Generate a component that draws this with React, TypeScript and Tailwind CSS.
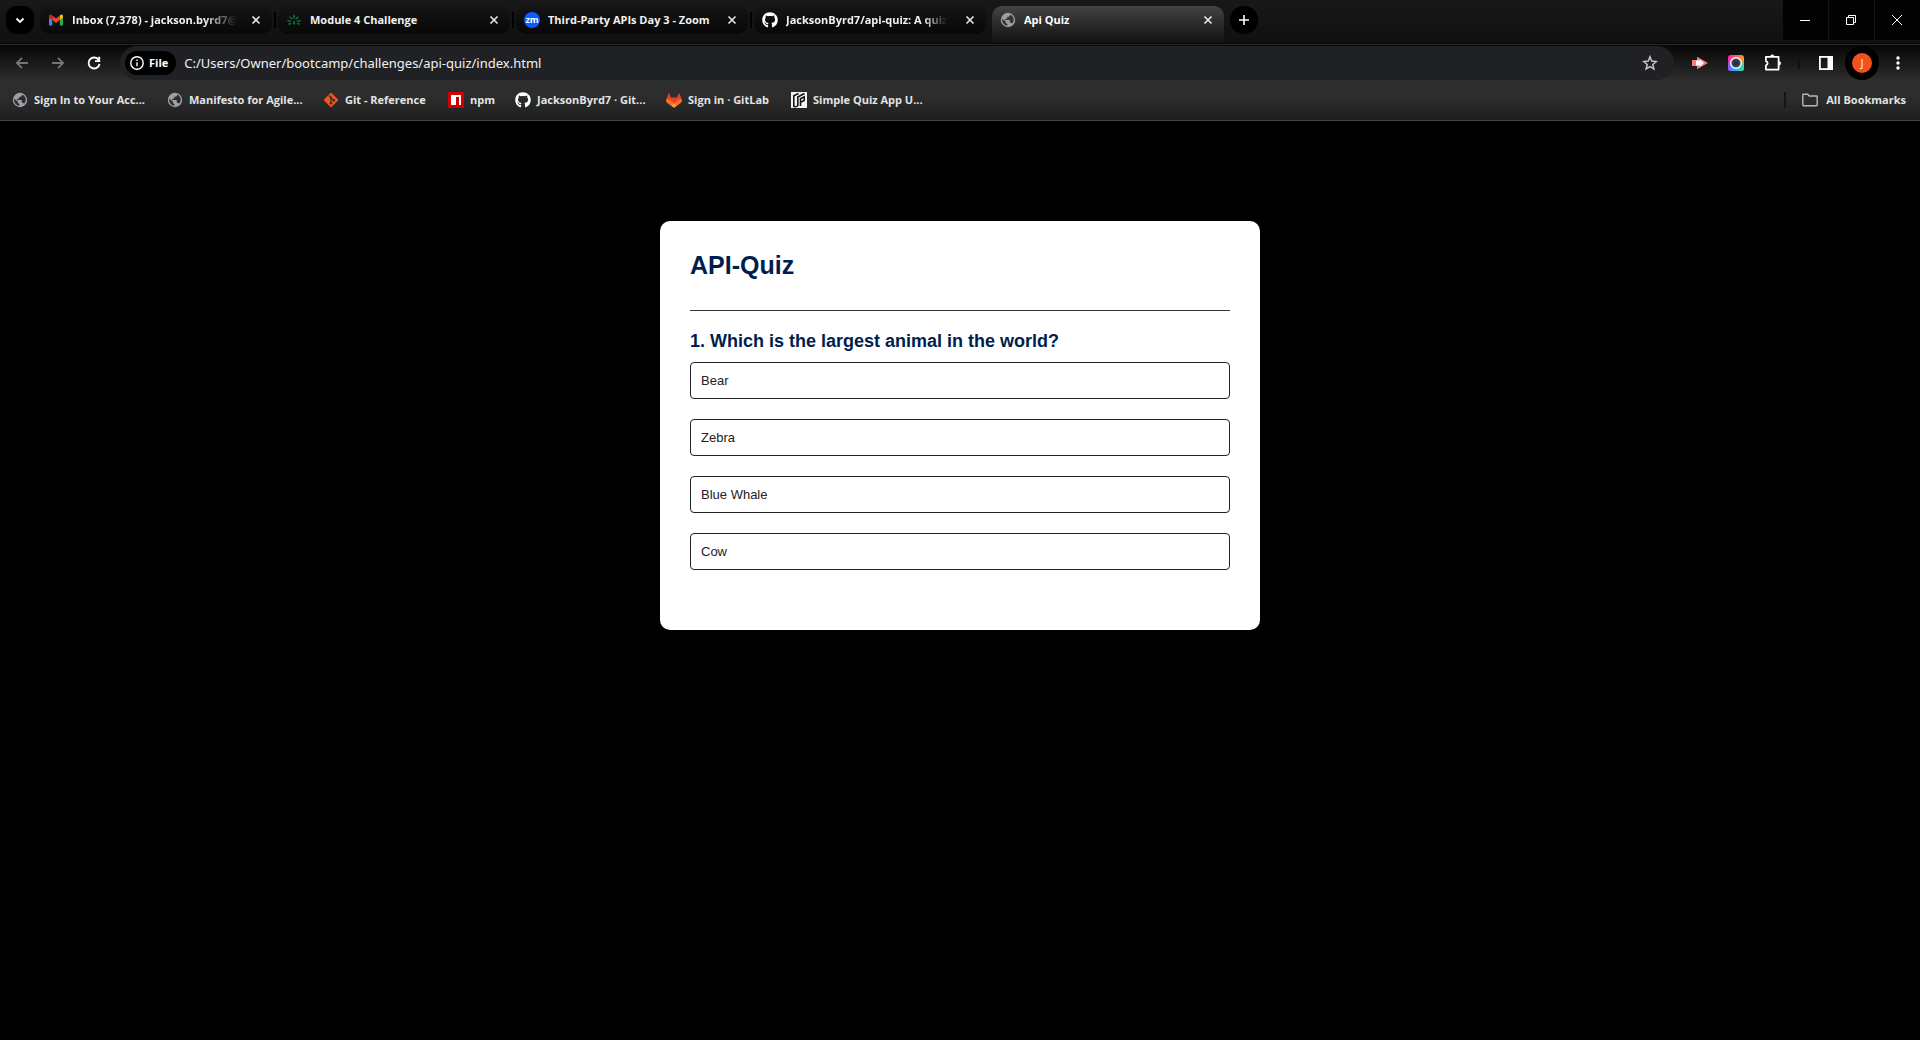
import React from "react";
import { FaGithub } from "react-icons/fa";

const Globe = ({ dark = "#2c2c2c" }: { dark?: string }) => (
  <svg viewBox="0 0 16 16" className="size-4 shrink-0" aria-hidden="true">
    <circle cx="8" cy="8" r="7.200" fill="#9aa0a6" />
    <path
      d="M2.200 6.800 5.800 9.600v1.500l1.600 1v1.700C4.400 13.500 2.200 11 2.200 8zM10 2.400v.9c0 .8-.6 1.400-1.400 1.400H7.300v1.400c0 .4-.3.700-.7.700H5.200v1.300h4c.4 0 .7.300.7.700v2h.8c.6 0 1.100.4 1.300.9A5.600 5.600 0 0 0 10 2.400z"
      fill={dark}
    />
  </svg>
);

const Gmail = () => (
  <svg viewBox="0 0 16 16" className="size-4 shrink-0" aria-hidden="true">
    <path d="M1 4v8.500c0 .6.400 1 1 1h2.200V7z" fill="#4285f4" />
    <path d="M15 4v8.500c0 .6-.4 1-1 1h-2.200V7z" fill="#34a853" />
    <path d="M11.800 3.500V8L15 5.700V4c0-1.500-1.500-2-2.500-1z" fill="#fbbc04" />
    <path d="M4.200 3.500V8L1 5.700V4c0-1.500 1.500-2 2.500-1z" fill="#c5221f" />
    <path d="M4.200 8V3.500L8 6.400l3.800-2.900V8L8 11z" fill="#ea4335" />
  </svg>
);

const Lotus = () => (
  <svg viewBox="0 0 16 16" className="size-4 shrink-0" fill="#0b6b3d" aria-hidden="true">
    <path d="M8 2.500c1.500 1.400 1.500 3 0 4.600-1.500-1.600-1.500-3.200 0-4.600z" />
    <path d="M3.200 4.200c2 .3 3.200 1.500 3.500 3.500-2-.2-3.300-1.500-3.500-3.500zM12.800 4.200c-2 .3-3.200 1.500-3.500 3.500 2-.2 3.300-1.500 3.500-3.500z" />
    <path d="M.8 8.200c2-.5 3.600.1 4.700 1.700-2 .5-3.600 0-4.700-1.700zM15.200 8.200c-2-.5-3.600.1-4.700 1.700 2 .5 3.600 0 4.700-1.700z" />
    <path d="M1.600 12.300c1-1.300 2.400-1.600 4-.9-.9 1.400-2.300 1.700-4 .9zM14.400 12.300c-1-1.300-2.400-1.600-4-.9.9 1.400 2.300 1.700 4 .9z" />
    <path d="M8 8.500c1.200 1.200 1.500 2.500.9 4H7.100c-.6-1.500-.3-2.800.9-4z" />
  </svg>
);

const ZoomLogo = () => (
  <span className="flex size-4 shrink-0 items-center justify-center rounded-full bg-[#0b5cff] pb-px text-[9px] leading-none font-bold text-white">zm</span>
);

const Git = () => (
  <svg viewBox="0 0 16 16" className="size-4 shrink-0" aria-hidden="true">
    <rect x="2.700" y="2.700" width="10.600" height="10.600" rx="1" transform="rotate(45 8 8)" fill="#f4511e" />
    <path d="M6 3.500 8 5.500v5.500M8 5.800l2.700 2.500" stroke="#2c2c2c" strokeWidth="1.100" fill="none" />
    <circle cx="8" cy="5.700" r="1.100" fill="#2c2c2c" />
    <circle cx="8" cy="11.200" r="1.200" fill="#2c2c2c" />
    <circle cx="10.800" cy="8.300" r="1.200" fill="#2c2c2c" />
  </svg>
);

const Npm = () => (
  <svg viewBox="0 0 16 16" className="size-4 shrink-0" aria-hidden="true">
    <path d="M0 0h16v16H0z" fill="#c00" />
    <path d="M3 3h10v10h-2V5H8v8H3z" fill="#fff" />
  </svg>
);

const GitHub = () => <FaGithub className="size-4 shrink-0 text-white" aria-hidden="true" />;

const GitLab = () => (
  <svg viewBox="0 0 16 16" className="size-4 shrink-0" aria-hidden="true">
    <path d="M3 .8 5 5.500h6L13 .8l2.600 6.200c.6 2-.1 3.500-1.600 4.500L8 15.800l-6-4.300C.5 10.500-.2 9 .4 7z" fill="#e24329" />
    <path d="M.4 7C2.500 7 4 7.800 5.500 9L11 13.600 8 15.800l-6-4.300C.5 10.500-.2 9 .4 7zM15.600 7c-2.100 0-3.600.8-5.100 2L5 13.600l3 2.200 6-4.300c1.500-1 2.200-2.500 1.600-4.500z" fill="#fc6d26" />
    <path d="M8 11.200 11 13.600 8 15.800 5 13.600z" fill="#fca326" />
  </svg>
);

const QuizMark = () => (
  <svg viewBox="0 0 16 16" className="size-4 shrink-0" aria-hidden="true">
    <path d="M0 0h16v16H0z" fill="#f5f5f5" />
    <path d="M7.500 1.500 2.800 3.800v10.400l2 .8M13.500 1.500 6.800 5v8.500l-1.500 1.500M9.500 14V6.800l3.700-2v3.600l-3.700 2" stroke="#151515" strokeWidth="1.600" fill="none" />
  </svg>
);

const Close = () => (
  <button type="button" aria-label="Close tab" className="flex size-4 shrink-0 items-center justify-center text-[#e8e8e8]">
    <svg viewBox="0 0 16 16" className="size-4" fill="none" stroke="currentColor" strokeWidth="1.600">
      <path d="m4.500 4.500 7 7m0-7-7 7" />
    </svg>
  </button>
);

const tabs = [
  { title: "Inbox (7,378) - jackson.byrd7@", icon: <Gmail />, fade: "mask-r-from-80%" },
  { title: "Module 4 Challenge", icon: <Lotus />, fade: "" },
  { title: "Third-Party APIs Day 3 - Zoom", icon: <ZoomLogo />, fade: "" },
  { title: "JacksonByrd7/api-quiz: A quiz", icon: <GitHub />, fade: "mask-r-from-85%" },
];

const bookmarks = [
  { title: "Sign In to Your Acc...", icon: <Globe />, width: "w-[155px]" },
  { title: "Manifesto for Agile...", icon: <Globe />, width: "w-[156px]" },
  { title: "Git - Reference", icon: <Git />, width: "w-[125px]" },
  { title: "npm", icon: <Npm />, width: "w-[67px]" },
  { title: "JacksonByrd7 · Git...", icon: <GitHub />, width: "w-[151px]" },
  { title: "Sign in · GitLab", icon: <GitLab />, width: "w-[125px]" },
  { title: "Simple Quiz App U...", icon: <QuizMark />, width: "w-[140px]" },
];

const TabStrip = () => (
  <div className="flex h-[43px] items-start bg-linear-to-b from-[#181818] to-[#101010] pl-1.5">
    <button type="button" aria-label="Search tabs" className="mt-1.5 mr-1.5 flex size-7 shrink-0 items-center justify-center rounded-[10px] bg-black text-white">
      <svg viewBox="0 0 16 16" className="size-4" fill="none" stroke="currentColor" strokeWidth="1.800">
        <path d="m4.500 6.500 3.500 3.500 3.500-3.500" />
      </svg>
    </button>
    {tabs.map((tab, i) => (
      <React.Fragment key={tab.title}>
        <div className="mt-1.5 flex h-7 w-[232px] items-center rounded-[10px] bg-linear-to-b from-[#141414] to-[#080808] px-2">
          {tab.icon}
          <a href="#" className="ml-2 flex-1 text-[11px] leading-4 font-bold whitespace-nowrap text-[#f1f1f1]">
            <span className={tab.fade}>{tab.title}</span>
          </a>
          <Close />
        </div>
        <div className="flex w-1.5 justify-center pt-3">{i < 3 && <div className="h-4 w-0.5 bg-black" />}</div>
      </React.Fragment>
    ))}
    <div className="mt-1.5 flex h-[37px] w-[232px] items-start rounded-t-[10px] bg-linear-to-b from-[#444444] to-[#121212] px-2 pt-1.5">
      <Globe dark="#363636" />
      <a href="#" className="mr-2 ml-2 flex-1 text-[11px] leading-4 font-bold text-white">
        Api Quiz
      </a>
      <Close />
    </div>
    <button type="button" aria-label="New tab" className="mt-1.5 ml-1.5 flex size-7 shrink-0 items-center justify-center rounded-full bg-black text-white">
      <svg viewBox="0 0 16 16" className="size-4" stroke="currentColor" strokeWidth="1.600">
        <path d="M8 3v10M3 8h10" />
      </svg>
    </button>
    <div className="ml-auto flex h-10 gap-px bg-[#151515] text-white">
      <button type="button" aria-label="Minimize" className="flex w-[45px] items-center justify-center bg-[#020202] pr-px">
        <span className="h-px w-2.5 bg-white" />
      </button>
      <button type="button" aria-label="Restore" className="flex w-[45px] items-center justify-center bg-[#020202] pr-px">
        <svg viewBox="0 0 10 10" className="size-2.5" fill="none" stroke="currentColor">
          <path d="M.5 2.500h7v7h-7zM2.500 2.500v-2h7v7h-2" />
        </svg>
      </button>
      <button type="button" aria-label="Close window" className="flex w-[45px] items-center justify-center bg-[#020202] pr-px">
        <svg viewBox="0 0 10 10" className="size-2.5" fill="none" stroke="currentColor">
          <path d="m0 0 10 10M10 0 0 10" />
        </svg>
      </button>
    </div>
  </div>
);

const Toolbar = () => (
  <div className="flex h-[34px] items-center px-3.5 text-white">
    <button type="button" aria-label="Back" className="mr-5 text-[#757575]">
      <svg viewBox="0 0 16 16" className="size-4" fill="none" stroke="currentColor" strokeWidth="1.800">
        <path d="M14 8H3.500M8 2.800 2.800 8 8 13.200" />
      </svg>
    </button>
    <button type="button" aria-label="Forward" className="mr-5 text-[#757575]">
      <svg viewBox="0 0 16 16" className="size-4" fill="none" stroke="currentColor" strokeWidth="1.800">
        <path d="M2 8h10.500M8 2.800 13.200 8 8 13.200" />
      </svg>
    </button>
    <button type="button" aria-label="Reload" className="mr-[18px]">
      <svg viewBox="0 0 16 16" className="size-4" fill="none" stroke="currentColor" strokeWidth="1.900">
        <path d="M12.700 5A5.500 5.500 0 1 0 13.500 9" />
        <path d="M13.200 1.800v4.300H9" />
      </svg>
    </button>
    <div className="flex h-full flex-1 items-center rounded-full bg-[#202124] pr-4 pl-[5px]">
      <button type="button" className="mr-2 flex h-6 items-center gap-[5px] rounded-full bg-black pr-2 pl-[5px] text-[11px] font-bold">
        <svg viewBox="0 0 14 14" className="size-3.5" fill="none" stroke="currentColor" strokeWidth="1.400">
          <circle cx="7" cy="7" r="6.200" />
          <path d="M7 6.200v4M7 3.500V5" />
        </svg>
        File
      </button>
      <input
        type="text"
        aria-label="Address and search bar"
        defaultValue="C:/Users/Owner/bootcamp/challenges/api-quiz/index.html"
        className="h-6 min-w-0 flex-1 bg-transparent font-['Noto_Sans','Open_Sans',sans-serif] text-[13px] text-[#f1f1f1] outline-none"
      />
      <button type="button" aria-label="Bookmark this page" className="text-[#c4c4c4]">
        <svg viewBox="0 0 16 16" className="size-4" fill="none" stroke="currentColor" strokeWidth="1.500">
          <path d="m8 1.800 1.700 4.300 4.600.4-3.500 3 1.100 4.500L8 11.600 4.100 14l1.100-4.500-3.500-3 4.600-.4z" />
        </svg>
      </button>
    </div>
    <button type="button" aria-label="Screen recorder" className="ml-[18px]">
      <svg viewBox="0 0 16 16" className="size-4">
        <path d="M0 5h5V1.800L16 8 5 14.200V11H0z" fill="#ff7b7b" />
        <path d="M4 5.500h4V4.500L12 8l-4 3.500v-1H4z" fill="#fff" />
      </svg>
    </button>
    <button type="button" aria-label="Screenshot" className="ml-5">
      <svg viewBox="0 0 16 16" className="size-4">
        <defs>
          <linearGradient id="cam-top" x1="0" x2="1" y1="0" y2="0">
            <stop offset="0" stopColor="#ff1fb0" />
            <stop offset="1" stopColor="#ff9d1c" />
          </linearGradient>
          <linearGradient id="cam-bottom" x1="0" x2="1" y1="0" y2="0">
            <stop offset="0" stopColor="#8a5cff" />
            <stop offset=".5" stopColor="#22b8ff" />
            <stop offset="1" stopColor="#35dc8c" />
          </linearGradient>
          <linearGradient id="cam-fade" x1="0" x2="0" y1="0" y2="1">
            <stop offset=".3" stopColor="#fff" stopOpacity="0" />
            <stop offset=".7" stopColor="#fff" />
          </linearGradient>
          <mask id="cam-mask">
            <rect width="16" height="16" fill="url(#cam-fade)" />
          </mask>
        </defs>
        <rect width="16" height="16" rx="3" fill="url(#cam-top)" />
        <rect width="16" height="16" rx="3" fill="url(#cam-bottom)" mask="url(#cam-mask)" />
        <circle cx="8" cy="8" r="5.300" fill="#34495e" stroke="#fff" strokeWidth="1.400" />
        <circle cx="8" cy="8" r="2.500" fill="#22303f" />
      </svg>
    </button>
    <button type="button" aria-label="Extensions" className="ml-5">
      <svg viewBox="0 0 18 18" className="size-[18px]" fill="none" stroke="currentColor" strokeWidth="1.800" strokeLinejoin="round">
        <path d="M1.900 2.900h12.700v12.700H1.900v-4.200a2.200 2.200 0 0 0 0-4.300z" />
        <path d="M6.500 2.500a1.800 1.800 0 0 1 3.600 0zM15 7.500a1.800 1.800 0 0 1 0 3.600z" fill="currentColor" strokeWidth=".6" />
      </svg>
    </button>
    <div className="ml-4 h-3 w-0.5 bg-[#111]" />
    <button type="button" aria-label="Side panel" className="ml-[19px]">
      <svg viewBox="0 0 14 14" className="size-3.5">
        <rect x=".9" y=".9" width="12.200" height="12.200" fill="none" stroke="#fff" strokeWidth="1.800" />
        <path d="M8.500 0H14v14H8.500z" fill="#fff" />
      </svg>
    </button>
    <button type="button" aria-label="Profile" className="ml-3 flex size-[34px] items-center justify-center rounded-full bg-black">
      <span className="flex size-5 items-center justify-center rounded-full bg-[#f4511e] text-[10px]">J</span>
    </button>
    <button type="button" aria-label="Menu" className="ml-[11px]">
      <svg viewBox="0 0 16 16" className="size-4" fill="currentColor">
        <circle cx="8" cy="3" r="1.700" />
        <circle cx="8" cy="8" r="1.700" />
        <circle cx="8" cy="13" r="1.700" />
      </svg>
    </button>
  </div>
);

const Bookmarks = () => (
  <nav aria-label="Bookmarks" className="flex h-[41px] items-center border-b border-[#444] pr-3.5 pl-3 text-[11px] leading-4 font-bold text-[#e3e3e3]">
    {bookmarks.map((b) => (
      <a key={b.title} href="#" className={`flex shrink-0 items-center gap-1.5 whitespace-nowrap ${b.width}`}>
        {b.icon}
        {b.title}
      </a>
    ))}
    <div className="mr-4 ml-auto h-4 w-0.5 bg-[#151515]" />
    <a href="#" className="flex items-center gap-2 whitespace-nowrap">
      <svg viewBox="0 0 16 16" className="size-4" fill="none" stroke="#b8b8b8" strokeWidth="1.400">
        <path d="M.8 12.800V3c0-.4.300-.7.700-.7h4.200l1.600 1.700h7.200c.4 0 .7.300.7.700v8.400c0 .4-.3.700-.7.700h-13c-.4 0-.7-.3-.7-1z" />
      </svg>
      All Bookmarks
    </a>
  </nav>
);

const answers = ["Bear", "Zebra", "Blue Whale", "Cow"];

const Quiz = () => (
  <main className="mx-auto mt-[100px] w-full max-w-[600px] rounded-[10px] bg-white px-[30px] pt-[30px] pb-[50px] font-['Liberation_Sans',Arial,sans-serif]">
    <h1 className="border-b border-[#333] pb-[31px] text-[25px] leading-7 font-semibold text-[#001e4d]">API-Quiz</h1>
    <h2 className="pt-5 text-lg leading-5 font-semibold text-[#001e4d]">1. Which is the largest animal in the world?</h2>
    <div className="flex flex-col gap-5 pt-[11px] pb-2.5">
      {answers.map((a) => (
        <button key={a} type="button" className="rounded-sm border border-[#222] bg-white p-2.5 text-left text-[13px] leading-[15px] text-[#222]">
          {a}
        </button>
      ))}
    </div>
  </main>
);

export default function App() {
  return (
    <div className="min-h-screen bg-black font-['Open_Sans','Noto_Sans',sans-serif]">
      <header>
        <TabStrip />
        <div className="h-[3px] border-y border-[#060606] bg-[#2a2a2a]" />
        <div className="bg-linear-to-b from-[#080808] via-[#2d2d2d] via-45% to-[#2d2d2d]">
          <Toolbar />
          <div className="bg-linear-to-b from-transparent from-40% to-[#1e1e1e]">
            <Bookmarks />
          </div>
        </div>
      </header>
      <Quiz />
    </div>
  );
}
